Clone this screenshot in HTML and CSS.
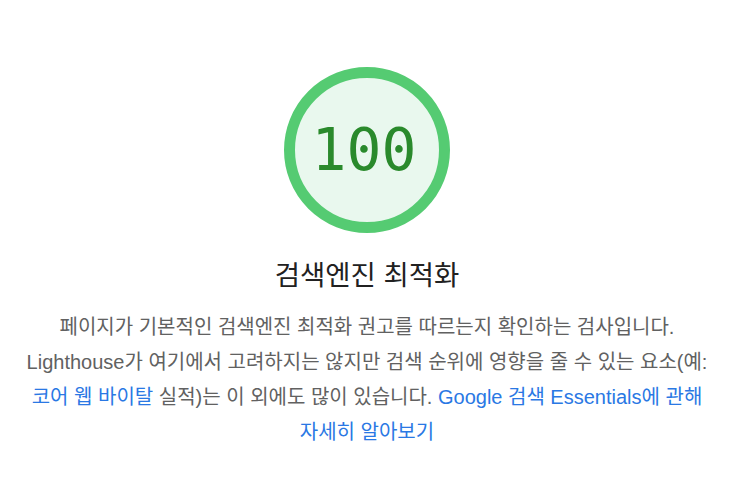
FILE: index.html
```html
<!DOCTYPE html>
<html lang="ko">
<head>
    <meta charset="UTF-8">
    <meta name="viewport" content="width=device-width, initial-scale=1.0">
    <title>검색엔진 최적화</title>
    <link rel="stylesheet" href="styles.css">
</head>
<body>
    <div id="main">
        <div class="gauge">
            <svg viewBox="0 0 166 166" width="166" height="166">
                <circle class="gauge-base" cx="83" cy="83" r="77.5"></circle>
            </svg>
            <span class="gauge-score">100</span>
        </div>
        <h1 class="title">검색엔진 최적화</h1>
        <p class="desc">페이지가 기본적인 검색엔진 최적화 권고를 따르는지 확인하는 검사입니다. Lighthouse가 여기에서 고려하지는 않지만 검색 순위에 영향을 줄 수 있는 요소(예: <a href="#">코어 웹 바이탈</a> 실적)는 이 외에도 많이 있습니다. <a href="#">Google 검색 Essentials에 관해 자세히 알아보기</a></p>
    </div>
</body>
</html>
```

FILE: styles.css
```css
body {
    margin: 0;
    background: #fff;
    font-family: "Liberation Sans", Arial, "Noto Sans CJK KR", sans-serif;
}

#main {
    width: 734px;
    padding-top: 67px;
    display: flex;
    flex-direction: column;
    align-items: center;
}

.gauge {
    position: relative;
    width: 166px;
    height: 166px;
}

.gauge svg {
    display: block;
}

.gauge-base {
    fill: #e9f8ee;
    stroke: #55cb72;
    stroke-width: 11;
}

.gauge-score {
    position: absolute;
    top: 0;
    left: -3px;
    width: 100%;
    line-height: 166px;
    text-align: center;
    font-family: "DejaVu Sans Mono", monospace;
    font-size: 58px;
    color: #2a8a2c;
}

.title {
    margin: 25px 0 0;
    font-size: 27.5px;
    font-weight: 400;
    line-height: 36px;
    color: #212121;
}

.desc {
    width: 700px;
    margin: 16px 0 0;
    font-size: 20px;
    line-height: 35px;
    text-align: center;
    color: #616161;
    word-break: keep-all;
}

.desc a {
    color: #2a78e4;
    text-decoration: none;
}
```
